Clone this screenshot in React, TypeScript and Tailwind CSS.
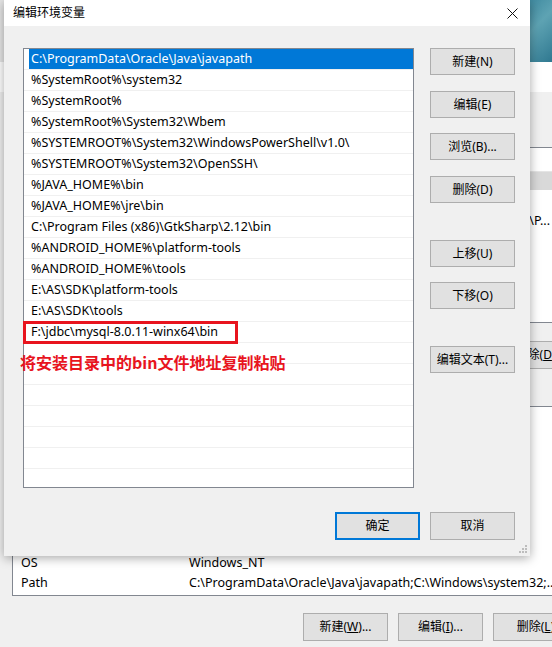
import React from "react";

const paths = [
  "C:\\ProgramData\\Oracle\\Java\\javapath",
  "%SystemRoot%\\system32",
  "%SystemRoot%",
  "%SystemRoot%\\System32\\Wbem",
  "%SYSTEMROOT%\\System32\\WindowsPowerShell\\v1.0\\",
  "%SYSTEMROOT%\\System32\\OpenSSH\\",
  "%JAVA_HOME%\\bin",
  "%JAVA_HOME%\\jre\\bin",
  "C:\\Program Files (x86)\\GtkSharp\\2.12\\bin",
  "%ANDROID_HOME%\\platform-tools",
  "%ANDROID_HOME%\\tools",
  "E:\\AS\\SDK\\platform-tools",
  "E:\\AS\\SDK\\tools",
  "F:\\jdbc\\mysql-8.0.11-winx64\\bin",
  "",
  "",
  "",
  "",
  "",
  "",
];

const ui = { fontFamily: '"Noto Sans", "Noto Sans CJK SC", sans-serif' };

function WinButton({ label, className = "" }: { label: React.ReactNode; className?: string }) {
  return (
    <div
      className={`flex h-[27px] w-[85px] shrink-0 items-center justify-center border border-[#adadad] bg-[#e1e1e1] text-[12px] text-black ${className}`}
    >
      {label}
    </div>
  );
}

function Acc({ pre, k, post = "" }: { pre: string; k: string; post?: string }) {
  return (
    <span className="whitespace-nowrap">
      {pre}(<span className="underline">{k}</span>){post}
    </span>
  );
}

export default function App() {
  return (
    <div className="relative h-[647px] w-[552px] overflow-hidden bg-[#e6e6e6]" style={ui}>
      {/* desktop wallpaper corner */}
      <div className="absolute right-0 top-0 h-[62px] w-[24px] bg-[linear-gradient(135deg,#3f8aa0,#5ea3b3_40%,#2f7890)]" />

      {/* environment variables window behind */}
      <div className="absolute inset-x-0 bottom-0 top-[62px] flex flex-col">
        <div className="h-[30px] bg-white" />
        <div className="flex flex-1 flex-col bg-[#f0f0f0] pl-[12px]">
          <div className="h-[55px]" />
          <div className="flex h-[176px] flex-col border-y border-l border-[#828790] bg-white">
            <div className="h-[24px] border-b border-[#e5e5e5]" />
            <div className="h-[18px] bg-[#d9d9d9]" />
            <div className="h-[21px]" />
            <div className="flex h-[21px] items-center justify-end overflow-hidden whitespace-nowrap pr-[2px] text-[12.5px]">
              ...;C:\Users\Administrator\AppData\Local\Microsoft\WindowsApps;C:\P...
            </div>
          </div>
          <div className="ml-[291px] mt-[18px] flex gap-[10px]">
            <WinButton label={<Acc pre="新建" k="N" post="..." />} className="h-[28px]" />
            <WinButton label={<Acc pre="编辑" k="E" post="..." />} className="h-[28px]" />
            <WinButton label={<Acc pre="删除" k="D" />} className="h-[28px]" />
          </div>
          <div className="h-[37px]" />
          <div className="flex h-[190px] flex-col justify-end border-b border-l border-t border-[#828790] bg-white pb-[2px] text-[12.5px] text-black">
            <div className="flex h-[20px] items-center">
              <span className="w-[176px] shrink-0 pl-[8px]">OS</span>
              <span>Windows_NT</span>
            </div>
            <div className="flex h-[20px] items-center">
              <span className="w-[176px] shrink-0 pl-[8px]">Path</span>
              <span className="whitespace-nowrap">C:\ProgramData\Oracle\Java\javapath;C:\Windows\system32;...</span>
            </div>
          </div>
          <div className="ml-[291px] mt-[17px] flex gap-[10px]">
            <WinButton label={<Acc pre="新建" k="W" post="..." />} className="h-[28px]" />
            <WinButton label={<Acc pre="编辑" k="I" post="..." />} className="h-[28px]" />
            <WinButton label={<Acc pre="删除" k="L" />} className="h-[28px]" />
          </div>
        </div>
      </div>

      {/* edit environment variable dialog */}
      <div className="absolute left-[4px] top-0 flex h-[556px] w-[526px] flex-col bg-[#f0f0f0] shadow-[0_2px_10px_rgba(0,0,0,0.35)]">
        <div className="flex h-[26px] items-center justify-between bg-white pl-[9px] pr-[5px]">
          <span className="text-[12px] text-black">编辑环境变量</span>
          <svg width="11" height="11" viewBox="0 0 11 11" className="mr-[7px]">
            <path d="M0.5 0.5L10.5 10.5M10.5 0.5L0.5 10.5" stroke="#111" strokeWidth="1" />
          </svg>
        </div>

        <div className="flex gap-[16px] pl-[19px] pt-[22px]">
          <div className="h-[440px] w-[391px] overflow-hidden border border-[#828790] bg-white text-[12.5px] text-black">
            {paths.map((p, i) => (
              <div key={i} className="flex h-[21px] items-center border-b border-[#f0f0f0]">
                {i === 0 ? (
                  <div className="ml-[5px] flex h-full flex-1 items-center bg-[#0078d7] pl-[2px] text-white">{p}</div>
                ) : (
                  <span className="whitespace-nowrap pl-[7px]">{p}</span>
                )}
              </div>
            ))}
          </div>

          <div className="flex flex-col">
            <WinButton label="新建(N)" />
            <WinButton label="编辑(E)" className="mt-[16px]" />
            <WinButton label="浏览(B)..." className="mt-[15px]" />
            <WinButton label="删除(D)" className="mt-[16px]" />
            <WinButton label="上移(U)" className="mt-[37px]" />
            <WinButton label="下移(O)" className="mt-[15px]" />
            <WinButton label="编辑文本(T)..." className="mt-[37px]" />
          </div>
        </div>

        <div className="mt-[24px] flex justify-end gap-[10px] pr-[15px]">
          <div className="flex h-[28px] w-[85px] items-center justify-center border-2 border-[#0078d7] bg-[#e1e1e1] text-[12px] text-black">
            确定
          </div>
          <WinButton label="取消" className="h-[28px]" />
        </div>

        <svg width="8" height="8" viewBox="0 0 8 8" className="absolute bottom-[3px] right-[3px]">
          <rect x="6" y="0" width="2" height="2" fill="#bdbdbd" />
          <rect x="3" y="3" width="2" height="2" fill="#bdbdbd" />
          <rect x="6" y="3" width="2" height="2" fill="#bdbdbd" />
          <rect x="0" y="6" width="2" height="2" fill="#bdbdbd" />
          <rect x="3" y="6" width="2" height="2" fill="#bdbdbd" />
          <rect x="6" y="6" width="2" height="2" fill="#bdbdbd" />
        </svg>
      </div>

      {/* red annotation */}
      <div className="absolute left-[23px] top-[321px] h-[23px] w-[215px] border-[3px] border-[#e8141e]" />
      <div
        className="absolute left-[20px] top-[352px] whitespace-nowrap text-[16px] font-bold leading-[21px] text-[#e8141e]"
        style={{ fontFamily: '"Noto Sans CJK SC", "Noto Sans", sans-serif' }}
      >
        将安装目录中的bin文件地址复制粘贴
      </div>
    </div>
  );
}
